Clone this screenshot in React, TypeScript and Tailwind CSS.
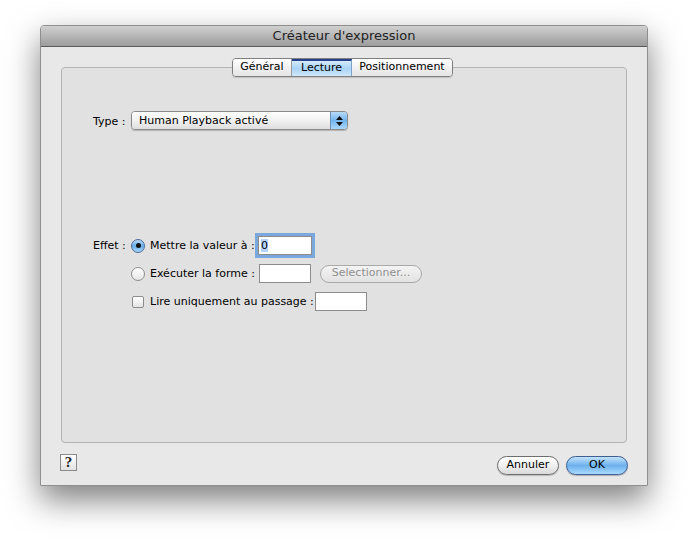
import React from 'react';

const font = { fontFamily: '"DejaVu Sans", "Liberation Sans", sans-serif' };

function Radio({ checked }: { checked?: boolean }) {
    return (
        <span
            className={
                checked
                    ? 'w-[14px] h-[14px] rounded-full border border-[#4a6b95] bg-gradient-to-b from-[#b9dcf8] via-[#6aaee9] to-[#a6d6fb] flex items-center justify-center shrink-0'
                    : 'w-[14px] h-[14px] rounded-full border border-[#8d8d8d] bg-gradient-to-b from-[#ffffff] to-[#e6e6e6] shrink-0'
            }
        >
            {checked && <span className="w-[5px] h-[5px] rounded-full bg-[#111]" />}
        </span>
    );
}

function TextField({ width, focused, value }: { width: number; focused?: boolean; value?: string }) {
    return (
        <span
            className={
                'h-[19px] bg-white border border-[#8c8c8c] text-[11px] leading-[18px] pl-[2px] text-black ' +
                (focused ? 'shadow-[0_0_0_3px_#7aa7dc]' : '')
            }
            style={{ width }}
        >
            {value && <span className="bg-[#b5d5ff]">{value}</span>}
        </span>
    );
}

export default function App() {
    return (
        <div className="w-[688px] h-[541px] bg-white pt-[25px] pl-[40px] text-[#000]" style={font}>
            <div className="w-[608px] h-[461px] flex flex-col rounded-t-[4px] shadow-[0_14px_32px_rgba(0,0,0,0.5)] border border-[#8e8e8e]">
                {/* barre de titre */}
                <div className="h-[21px] rounded-t-[4px] bg-gradient-to-b from-[#d0d0d0] to-[#9d9d9d] border-b border-[#5a5a5a] flex items-center justify-center text-[13px] text-[#222]">
                    Créateur d'expression
                </div>

                <div className="flex-1 bg-[#e8e8e8] flex flex-col">
                    <div className="px-[20px] pt-[11px]">
                        <div className="flex justify-center relative z-10 -mb-[10px] pr-[3px]">
                            <div className="flex h-[19px] rounded-[4px] border border-[#7f7f7f] overflow-hidden text-[11px] shadow-[0_1px_1px_rgba(0,0,0,0.15)]">
                                <span className="w-[59px] flex items-center justify-center bg-gradient-to-b from-white to-[#e4e4e4] border-r border-[#9a9a9a]">
                                    Général
                                </span>
                                <span className="w-[60px] flex items-center justify-center bg-gradient-to-b from-[#d4ebfc] via-[#a9d4f6] to-[#cfe8fb] border-r border-[#7ca3cc] border-t-2 border-t-[#27408b]">
                                    Lecture
                                </span>
                                <span className="w-[100px] flex items-center justify-center bg-gradient-to-b from-white to-[#e4e4e4]">
                                    Positionnement
                                </span>
                            </div>
                        </div>
                        <div className="h-[376px] rounded-[4px] border border-[#b3b3b3] bg-[#e1e1e1] pl-[31px] pt-[43px] text-[11px]">
                            <div className="flex items-center h-[19px]">
                                <span className="w-[38px] translate-y-[2px]">Type :</span>
                                <div className="flex w-[217px] h-[19px] rounded-[4px] border border-[#8a8a8a] overflow-hidden shadow-[0_1px_1px_rgba(0,0,0,0.2)]">
                                    <span className="flex-1 pl-[7px] pt-[2px] flex items-center bg-gradient-to-b from-white via-[#f1f1f1] to-[#dedede]">
                                        Human Playback activé
                                    </span>
                                    <span className="w-[17px] border-l border-[#6f8fb5] bg-gradient-to-b from-[#b6dbf9] via-[#74b5ee] to-[#a9d7fb] flex flex-col items-center justify-center gap-[2px]">
                                        <svg width="7" height="4" viewBox="0 0 7 4"><path d="M3.5 0 L7 4 L0 4 Z" fill="#111" /></svg>
                                        <svg width="7" height="4" viewBox="0 0 7 4"><path d="M0 0 L7 0 L3.5 4 Z" fill="#111" /></svg>
                                    </span>
                                </div>
                            </div>

                            <div className="mt-[106px] flex">
                                <span className="w-[38px] h-[19px] flex items-center translate-y-[1px]">Effet :</span>
                                <div className="flex flex-col gap-[9px]">
                                    <div className="flex items-center h-[19px]">
                                        <Radio checked />
                                        <span className="ml-[5px] w-[108px] translate-y-[1px]">Mettre la valeur à :</span>
                                        <TextField width={54} focused value="0" />
                                    </div>
                                    <div className="flex items-center h-[19px]">
                                        <Radio />
                                        <span className="ml-[5px] w-[109px] translate-y-[1px]">Exécuter la forme :</span>
                                        <TextField width={52} />
                                        <span className="ml-[9px] w-[102px] h-[18px] rounded-full border border-[#a9a9a9] bg-gradient-to-b from-[#f4f4f4] to-[#e2e2e2] flex items-center justify-center text-[#8f8f8f]">
                                            Selectionner...
                                        </span>
                                    </div>
                                    <div className="flex items-center h-[19px]">
                                        <span className="ml-[1px] w-[12px] h-[12px] rounded-[2px] border border-[#8d8d8d] bg-gradient-to-b from-white to-[#e4e4e4] shrink-0" />
                                        <span className="ml-[6px] w-[165px] translate-y-[1px]">Lire uniquement au passage :</span>
                                        <TextField width={52} />
                                    </div>
                                </div>
                            </div>
                        </div>
                    </div>

                    <div className="flex items-start px-[19px] pt-[11px]">
                        <span className="w-[17px] h-[17px] border border-[#8a8a8a] bg-gradient-to-b from-white to-[#e2e2e2] flex items-center justify-center text-[15px] font-bold leading-none text-[#222]" style={{ fontFamily: '"Liberation Serif", serif' }}>
                            ?
                        </span>
                        <div className="ml-auto mt-[2px] flex gap-[7px] text-[11px]">
                            <span className="w-[62px] h-[19px] rounded-full border border-[#6e6e6e] bg-gradient-to-b from-white via-[#f0f0f0] to-[#d9d9d9] flex items-center justify-center shadow-[0_1px_1px_rgba(0,0,0,0.2)]">
                                Annuler
                            </span>
                            <span className="w-[62px] h-[19px] rounded-full border border-[#3d5f94] bg-gradient-to-b from-[#c4e2fb] via-[#6cb1ed] to-[#a9dafd] flex items-center justify-center shadow-[0_1px_1px_rgba(0,0,0,0.25)]">
                                OK
                            </span>
                        </div>
                    </div>
                </div>
            </div>
        </div>
    );
}
